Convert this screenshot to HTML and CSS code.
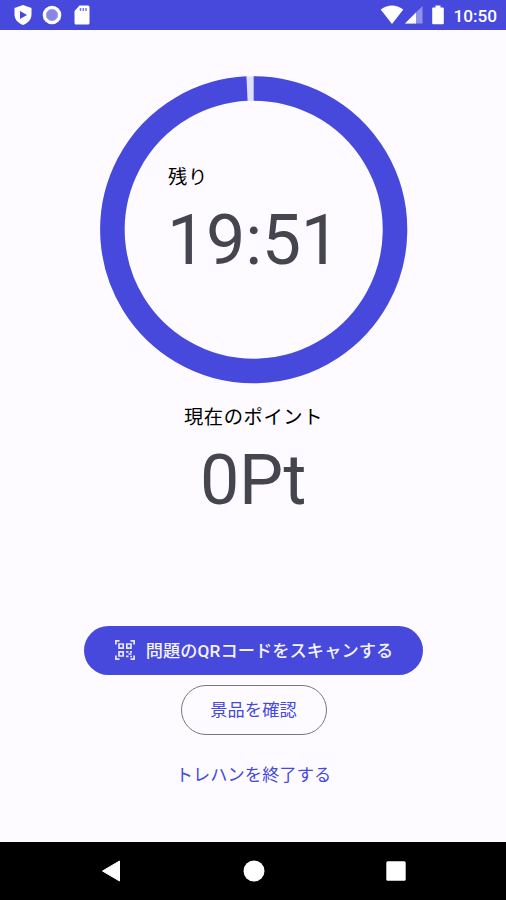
FILE: index.html
```html
<!DOCTYPE html>
<html lang="ja">
<head>
<meta charset="utf-8">
<title>トレハン</title>
<link rel="stylesheet" href="styles.css">
</head>
<body>
<header class="status">
  <div class="status-left">
    <svg class="shield" width="18" height="22" viewBox="0 0 18 22"><path fill="#fff" d="M9 1 17.500 4v6.500c0 5-3.500 8.500-8.500 10.500C4 19 .5 15.500.5 10.500V4z"/><path fill="#4649db" d="M6 7v8l7-4z"/></svg>
    <svg width="20" height="20" viewBox="0 0 20 20"><circle cx="10" cy="10" r="9.300" fill="#fff"/><circle cx="10" cy="10" r="5.700" fill="#8587e2" stroke="#a5a6ea" stroke-width="1"/></svg>
    <svg class="card" width="16" height="20" viewBox="0 0 16 20"><path fill="#fff" d="M5.500.5H14a1.500 1.500 0 0 1 1.500 1.500v16a1.500 1.500 0 0 1-1.500 1.500H2A1.500 1.500 0 0 1 .5 18V6z"/><path stroke="#7779df" stroke-width="1.500" d="M6.500 3v3M9.300 3v3M12 3v3"/></svg>
  </div>
  <div class="status-right">
    <svg width="24" height="20" viewBox="0 0 24 20"><path fill="#fff" d="M.7 4.500Q12-3.500 23.300 4.500L12 19z"/></svg>
    <svg class="signal" width="18" height="18" viewBox="0 0 18 18"><path fill="#9092ea" d="M17.500 0v17.500H0z"/><path fill="#fff" d="M11 6.500v11H0z"/></svg>
    <svg class="battery" width="12" height="20" viewBox="0 0 12 20"><path fill="#fff" d="M3.500.5h5v2H11a.8.8 0 0 1 .8.800v15a1 1 0 0 1-1 1H1.200a1 1 0 0 1-1-1v-15a.8.8 0 0 1 .8-.8h2.500z"/></svg>
    <span class="clock">10:50</span>
  </div>
</header>
<main class="screen">
  <section class="timer">
    <svg class="ring" width="308" height="308" viewBox="0 0 308 308">
      <circle cx="153.700" cy="153.700" r="141.300" fill="none" stroke="#dfe0fb" stroke-width="24.500"/>
      <path d="M153.700 12.400A141.300 141.300 0 1 1 147 12.560" fill="none" stroke="#4649db" stroke-width="24.500"/>
    </svg>
    <div class="timer-text">
      <div class="label">残り</div>
      <div class="display">19:51</div>
    </div>
  </section>
  <section class="points">
    <div class="label">現在のポイント</div>
    <div class="display">0Pt</div>
  </section>
  <div class="actions">
    <button class="btn filled">
      <svg width="20" height="20" viewBox="1 1 20 20" fill="none" stroke="#e6e6ff" stroke-width="1.700"><path d="M1.900 5.500V1.900h3.600M16.500 1.900h3.600v3.600M20.100 16.500v3.600h-3.600M5.500 20.100H1.900v-3.600"/><path d="M5 5h4.200v4.200H5zM12.800 5H17v4.200h-4.200zM5 12.800h4.200V17H5z"/><path d="M12 12.800h2.500M14.500 15h3M12 17.300h2.500M16 12.800h2M16.200 17.500h1.800"/></svg>
      <span>問題のQRコードをスキャンする</span>
    </button>
    <button class="btn outlined">景品を確認</button>
    <button class="btn text">トレハンを終了する</button>
  </div>
</main>
<nav class="navbar">
  <svg width="20" height="22" viewBox="0 0 20 22"><path fill="#fff" stroke="#fff" stroke-linejoin="round" d="M1.500 11 18.500 1v20z"/></svg>
  <svg width="22" height="22" viewBox="0 0 22 22"><circle cx="11" cy="11" r="10.500" fill="#fff"/></svg>
  <svg width="20" height="20" viewBox="0 0 20 20"><rect x=".3" y=".3" width="19.400" height="19.400" rx="1.500" fill="#fff"/></svg>
</nav>
</body>
</html>
```
FILE: styles.css
```css
* { box-sizing: border-box; }
body {
  margin: 0;
  height: 900px;
  display: flex;
  flex-direction: column;
  overflow: hidden;
  background: #fdfbff;
  color: #1b1b1f;
  font-family: Roboto, "Noto Sans CJK JP", sans-serif;
}
svg { display: block; flex: none; }
.status {
  height: 29.500px;
  flex: none;
  padding: 0 9px 0 14px;
  display: flex;
  align-items: center;
  justify-content: space-between;
  background: #4649db;
  color: #fff;
}
.status-left, .status-right { display: flex; align-items: center; }
.status-left { gap: 10px; }
.card { margin-left: 2px; }
.signal { margin-left: 1px; }
.battery { margin-left: 9px; }
.clock { margin-left: 9px; font-size: 17.200px; font-weight: 500; line-height: 30px; padding-top: 3px; }
.screen {
  flex: 1;
  display: flex;
  flex-direction: column;
  align-items: center;
  padding-top: 46px;
}
.timer { display: grid; place-items: center; margin-left: 1px; }
.ring, .timer-text { grid-area: 1 / 1; }
.timer-text { margin-top: -17px; }
.label { font-size: 19.300px; line-height: 30px; letter-spacing: .6px; color: #000; }
.timer .label { padding-left: 1px; }
.display { font-size: 70px; line-height: 79px; letter-spacing: -.3px; color: #45454f; margin-top: 8px; }
.points { text-align: center; margin-top: 19px; }
.points .label { padding-left: 1px; }
.points .display { margin-top: 8px; }
.actions {
  display: flex;
  flex-direction: column;
  align-items: center;
  margin-top: 106px;
}
.btn {
  height: 49px;
  border: 0;
  border-radius: 25px;
  display: flex;
  align-items: center;
  justify-content: center;
  background: none;
  color: #4649db;
  font: 400 17.200px/25px Roboto, "Noto Sans CJK JP", sans-serif;
  letter-spacing: .1px;
  padding: 2px 29px 0;
}
.filled { width: 339px; gap: 11px; padding-left: 31px; font-weight: 500; background: #4649db; color: #f4f3ff; }
.filled svg { margin-top: -2px; }
.outlined { width: 146px; height: 50px; margin: 10px 0 0 1px; border: 1px solid #777680; padding: 2px 0 0; }
.text { margin: 15px 0 0 1px; }
.navbar {
  height: 58px;
  flex: none;
  padding: 0 100px 0 101px;
  display: flex;
  align-items: center;
  justify-content: space-between;
  background: #000;
}
```
